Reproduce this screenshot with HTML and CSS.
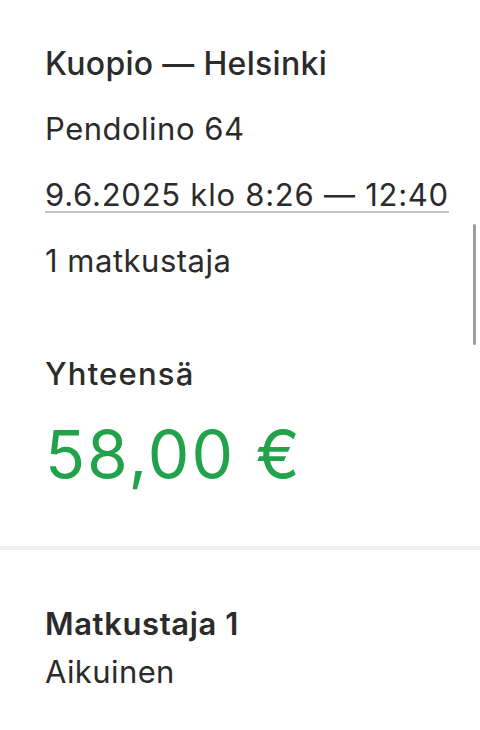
FILE: index.html
```html
<!DOCTYPE html>
<html lang="fi">
<head>
<meta charset="utf-8">
<title>Matkan tiedot</title>
<link rel="stylesheet" href="styles.css">
</head>
<body>
<main class="page">
  <section class="trip">
    <h1 class="route">Kuopio — Helsinki</h1>
    <p class="line train">Pendolino 64</p>
    <p class="line date"><a class="date-link" href="#">9.6.2025 klo 8:26 — 12:40</a></p>
    <p class="line pax">1 matkustaja</p>
    <p class="total-label">Yhteensä</p>
    <p class="total">58,00 €</p>
  </section>
  <hr class="divider">
  <section class="traveller">
    <h2 class="traveller-title">Matkustaja 1</h2>
    <p class="traveller-type">Aikuinen</p>
  </section>
  <div class="scroll-indicator"></div>
</main>
</body>
</html>
```
FILE: styles.css
```css
html, body {
  margin: 0;
  padding: 0;
  background: #ffffff;
}
body {
  font-family: Inter, "Liberation Sans", Arial, sans-serif;
  color: #2b2b2b;
  width: 480px;
  height: 730px;
  overflow: hidden;
}
.page {
  position: relative;
  height: 730px;
}
.trip {
  padding: 44px 0 0 45px;
}
.route {
  margin: 0;
  font-size: 32px;
  line-height: 40px;
  font-weight: 500;
  letter-spacing: 0.3px;
}
.line {
  margin: 25px 0 0;
  font-size: 31px;
  line-height: 40px;
  font-weight: 400;
  letter-spacing: 0.5px;
}
.date, .pax { margin-top: 26px; }
.date { letter-spacing: 0.75px; }
.date-link {
  color: inherit;
  text-decoration: underline;
  text-decoration-color: #c4c4c4;
  text-decoration-thickness: 2px;
  text-underline-offset: 5px;
}
.total-label {
  margin: 73px 0 0;
  font-size: 31px;
  line-height: 40px;
  font-weight: 500;
  letter-spacing: 1.2px;
}
.total {
  margin: 20px 0 0;
  font-size: 66px;
  line-height: 80px;
  color: #22a24a;
  font-weight: 400;
  letter-spacing: 2px;
}
.divider {
  margin: 52px 0 0;
  border: 0;
  height: 4px;
  background: #efefef;
}
.traveller {
  padding: 56px 0 0 45px;
}
.traveller-title {
  margin: 0;
  font-size: 31px;
  line-height: 36px;
  font-weight: 600;
  letter-spacing: 0.6px;
}
.traveller-type {
  margin: 10px 0 0;
  font-size: 31px;
  line-height: 40px;
  letter-spacing: 0.4px;
}
.scroll-indicator {
  position: absolute;
  left: 473px;
  top: 224px;
  width: 3px;
  height: 121px;
  border-radius: 2px;
  background: #9e9e9e;
}
```
